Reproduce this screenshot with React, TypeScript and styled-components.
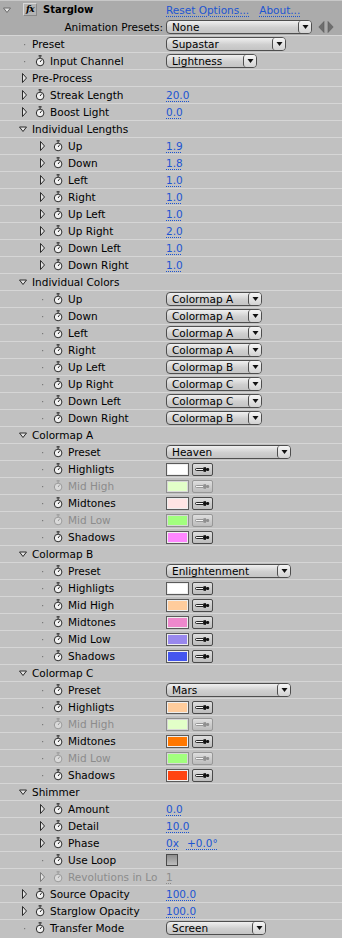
import React from "react";
import styled, { createGlobalStyle } from "styled-components";

const rowBg = "#c1c1c1";
const headBg = "#ababab";
const line = "#d6d6d6";
const blue = "#1d55d2";
const dimText = "#8c8c8c";

const Global = createGlobalStyle`
  html, body {
    margin: 0;
    background: ${rowBg};
  }
  body {
    font-family: "DejaVu Sans", "Liberation Sans", sans-serif;
    font-size: 10.5px;
    color: #000;
  }
`;

const Panel = styled.div`
  width: 342px;
  min-height: 938px;
  background: ${rowBg};
  overflow: hidden;
`;

const Header = styled.div`
  background: ${headBg};
  border-top: 1px solid #c8c8c8;
  height: 34px;
  display: grid;
  grid-template-rows: 17px 17px;
`;

const HeadLine = styled.div`
  display: grid;
  grid-template-columns: 166px 1fr;
  align-items: center;
`;

const HeadName = styled.div`
  display: flex;
  align-items: center;
  padding-left: 3px;
  gap: 6px;
  font-weight: bold;
  font-size: 10px;
`;

const FxBox = styled.span`
  width: 12px;
  height: 11px;
  border: 1px solid #d8d8d8;
  border-right-color: #8a8a8a;
  border-bottom-color: #8a8a8a;
  background: #b4b4b4;
  font-family: "DejaVu Serif", serif;
  font-style: italic;
  font-weight: bold;
  font-size: 9px;
  line-height: 11px;
  text-align: center;
  letter-spacing: -0.5px;
`;

const Links = styled.div`
  display: flex;
  gap: 10px;
`;

const Link = styled.span`
  color: ${blue};
  text-decoration: underline dotted;
  text-underline-offset: 2px;
`;

const PresetLabel = styled.div`
  text-align: right;
  padding-right: 3px;
`;

const PresetControls = styled.div`
  display: flex;
  align-items: center;
  gap: 6px;
`;

const Row = styled.div`
  height: 16px;
  border-top: 1px solid ${line};
  display: grid;
  grid-template-columns: 158px 1fr;
  align-items: center;
`;

const LabelCell = styled.div<{ $indent: number; $dim?: boolean }>`
  display: flex;
  align-items: center;
  padding-left: ${(p) => p.$indent}px;
  white-space: nowrap;
  color: ${(p) => (p.$dim ? dimText : "#000")};
`;

const Slot = styled.span<{ $w: number }>`
  flex: none;
  width: ${(p) => p.$w}px;
  height: 16px;
  display: flex;
  align-items: center;
`;

const ValueCell = styled.div`
  padding-left: 8px;
  display: flex;
  align-items: center;
  gap: 8px;
  white-space: nowrap;
`;

const Num = styled.span<{ $dim?: boolean }>`
  color: ${(p) => (p.$dim ? dimText : blue)};
  text-decoration: underline dotted;
  text-underline-offset: 2px;
`;

const DropBox = styled.div<{ $w: number }>`
  box-sizing: border-box;
  width: ${(p) => p.$w}px;
  height: 14px;
  border: 1px solid #4e4e4e;
  border-radius: 4px;
  background: linear-gradient(#f0f0f0, #cfcfcf 55%, #c4c4c4);
  display: flex;
  align-items: stretch;
  overflow: hidden;
`;

const DropText = styled.span`
  flex: 1;
  padding-left: 5px;
  line-height: 12px;
`;

const DropArrow = styled.span`
  width: 12px;
  border-left: 1px solid #4e4e4e;
  border-radius: 3px 0 0 3px;
  display: flex;
  align-items: center;
  justify-content: center;
  background: linear-gradient(#f6f6f6, #d2d2d2);
`;

const Swatch = styled.span<{ $c: string; $dim?: boolean }>`
  box-sizing: border-box;
  width: 23px;
  height: 13px;
  border: 1px solid ${(p) => (p.$dim ? "#909090" : "#5a5a5a")};
  box-shadow: inset 0 0 0 1px ${(p) => (p.$dim ? "#d8d8d8" : "#eeeeee")};
  background: ${(p) => p.$c};
`;

const Dropper = styled.span<{ $dim?: boolean }>`
  box-sizing: border-box;
  width: 21px;
  height: 13px;
  border: 1px solid ${(p) => (p.$dim ? "#979797" : "#4a4a4a")};
  border-radius: 2px;
  background: linear-gradient(#dedede, #bcbcbc);
  display: flex;
  align-items: center;
  justify-content: center;
`;

const ColorPair = styled.span`
  display: flex;
  align-items: center;
  gap: 3px;
`;

const Check = styled.span`
  box-sizing: border-box;
  width: 12px;
  height: 12px;
  border: 1px solid #4a4a4a;
  background: linear-gradient(#8e8e8e, #bdbdbd);
`;

const TwirlRight = ({ dim }: { dim?: boolean }) => (
  <svg width="14" height="16" viewBox="0 0 14 16">
    <path
      d="M4.5 3.5 L8.5 8 L4.5 12.5 Z"
      fill="#e4e4e4"
      stroke={dim ? "#7a7a7a" : "#2a2a2a"}
      strokeWidth="1"
      strokeLinejoin="round"
    />
  </svg>
);

const TwirlDown = ({ color = "#2a2a2a", x = 1 }: { color?: string; x?: number }) => (
  <svg width="14" height="16" viewBox="0 0 14 16">
    <path
      d={`M${x + 0.5} 6 L${x + 7.5} 6 L${x + 4} 10.5 Z`}
      fill="#e4e4e4"
      stroke={color}
      strokeWidth="1"
      strokeLinejoin="round"
    />
  </svg>
);

const Dot = () => (
  <svg width="14" height="16" viewBox="0 0 14 16">
    <rect x="6" y="8" width="1.2" height="1.2" fill="#7a7a7a" />
  </svg>
);

const Watch = ({ dim }: { dim?: boolean }) => {
  const s = dim ? "#9a9a9a" : "#2c2c2c";
  return (
    <svg width="18" height="16" viewBox="0 0 18 16">
      <rect x="6.6" y="2.2" width="3" height="1.3" fill={s} />
      <line x1="8.1" y1="3.4" x2="8.1" y2="5" stroke={s} strokeWidth="1" />
      <circle cx="8.1" cy="9" r="3.8" fill={dim ? "#dadada" : "#f2f2f2"} stroke={s} strokeWidth="1" />
      <line x1="8.1" y1="9" x2="9.8" y2="6.6" stroke={s} strokeWidth="1" />
    </svg>
  );
};

const SmallArrow = () => (
  <svg width="7" height="6" viewBox="0 0 7 6">
    <path d="M0.5 1 L6.5 1 L3.5 5 Z" fill="#111" />
  </svg>
);

const Pipette = ({ dim }: { dim?: boolean }) => {
  const c = dim ? "#8f8f8f" : "#111";
  return (
    <svg width="15" height="7" viewBox="0 0 15 7">
      <path d="M1.5 2.5 H8.5 V4.5 H1.5 A1 1 0 0 1 1.5 2.5 Z" fill="#f6f6f6" stroke={c} strokeWidth="0.9" />
      <rect x="8.5" y="1.2" width="2.5" height="4.6" fill={c} />
      <rect x="11" y="2" width="3.2" height="3" rx="1.3" fill={c} />
    </svg>
  );
};

const PresetArrows = () => (
  <svg width="16" height="12" viewBox="0 0 16 12">
    <path d="M6 0.5 L0.8 6 L6 11.5 Z" fill="#6e6e6e" stroke="#5a5a5a" strokeWidth="0.6" />
    <path d="M10 0.5 L15.2 6 L10 11.5 Z" fill="#6e6e6e" stroke="#5a5a5a" strokeWidth="0.6" />
  </svg>
);

type Twirl = "open" | "closed" | "dot";

type ParamProps = {
  label: string;
  level?: 0 | 1;
  twirl?: Twirl;
  watch?: boolean;
  dim?: boolean;
  children?: React.ReactNode;
};

const Param = ({ label, level = 0, twirl = "dot", watch = true, dim, children }: ParamProps) => (
  <Row>
    <LabelCell $indent={level === 0 ? 18 : 36} $dim={dim}>
      <Slot $w={14}>
        {twirl === "open" && <TwirlDown />}
        {twirl === "closed" && <TwirlRight dim={dim} />}
        {twirl === "dot" && <Dot />}
      </Slot>
      {watch && (
        <Slot $w={18}>
          <Watch dim={dim} />
        </Slot>
      )}
      {label}
    </LabelCell>
    <ValueCell>{children}</ValueCell>
  </Row>
);

const Dropdown = ({ text, w }: { text: string; w: number }) => (
  <DropBox $w={w}>
    <DropText>{text}</DropText>
    <DropArrow>
      <SmallArrow />
    </DropArrow>
  </DropBox>
);

const ColorVal = ({ c, dim }: { c: string; dim?: boolean }) => (
  <ColorPair>
    <Swatch $c={c} $dim={dim} />
    <Dropper $dim={dim}>
      <Pipette dim={dim} />
    </Dropper>
  </ColorPair>
);

const lengths: [string, string][] = [
  ["Up", "1.9"],
  ["Down", "1.8"],
  ["Left", "1.0"],
  ["Right", "1.0"],
  ["Up Left", "1.0"],
  ["Up Right", "2.0"],
  ["Down Left", "1.0"],
  ["Down Right", "1.0"],
];

const colorsFor: [string, string][] = [
  ["Up", "Colormap A"],
  ["Down", "Colormap A"],
  ["Left", "Colormap A"],
  ["Right", "Colormap A"],
  ["Up Left", "Colormap B"],
  ["Up Right", "Colormap C"],
  ["Down Left", "Colormap C"],
  ["Down Right", "Colormap B"],
];

type Colormap = {
  name: string;
  preset: string;
  swatches: { label: string; c: string; dim?: boolean }[];
};

const colormaps: Colormap[] = [
  {
    name: "Colormap A",
    preset: "Heaven",
    swatches: [
      { label: "Highligts", c: "#ffffff" },
      { label: "Mid High", c: "#e2ffc8", dim: true },
      { label: "Midtones", c: "#ffe4e4" },
      { label: "Mid Low", c: "#a2ff7e", dim: true },
      { label: "Shadows", c: "#ff86ff" },
    ],
  },
  {
    name: "Colormap B",
    preset: "Enlightenment",
    swatches: [
      { label: "Highligts", c: "#ffffff" },
      { label: "Mid High", c: "#ffcc9c" },
      { label: "Midtones", c: "#ee88cc" },
      { label: "Mid Low", c: "#9988ee" },
      { label: "Shadows", c: "#4455ee" },
    ],
  },
  {
    name: "Colormap C",
    preset: "Mars",
    swatches: [
      { label: "Highligts", c: "#ffcc9c" },
      { label: "Mid High", c: "#e2ffc8", dim: true },
      { label: "Midtones", c: "#ff7700" },
      { label: "Mid Low", c: "#a2ff7e", dim: true },
      { label: "Shadows", c: "#ff4411" },
    ],
  },
];

const App = () => (
  <Panel>
    <Global />
    <Header>
      <HeadLine>
        <HeadName>
          <TwirlDown color="#6a6a6a" x={0} />
          <FxBox>fx</FxBox>
          Starglow
        </HeadName>
        <Links>
          <Link>Reset Options...</Link>
          <Link>About...</Link>
        </Links>
      </HeadLine>
      <HeadLine>
        <PresetLabel>Animation Presets:</PresetLabel>
        <PresetControls>
          <Dropdown text="None" w={146} />
          <PresetArrows />
        </PresetControls>
      </HeadLine>
    </Header>

    <Param label="Preset" watch={false}>
      <Dropdown text="Supastar" w={120} />
    </Param>
    <Param label="Input Channel">
      <Dropdown text="Lightness" w={91} />
    </Param>
    <Param label="Pre-Process" twirl="closed" watch={false} />
    <Param label="Streak Length" twirl="closed">
      <Num>20.0</Num>
    </Param>
    <Param label="Boost Light" twirl="closed">
      <Num>0.0</Num>
    </Param>

    <Param label="Individual Lengths" twirl="open" watch={false} />
    {lengths.map(([l, v]) => (
      <Param key={"len" + l} label={l} level={1} twirl="closed">
        <Num>{v}</Num>
      </Param>
    ))}

    <Param label="Individual Colors" twirl="open" watch={false} />
    {colorsFor.map(([l, v]) => (
      <Param key={"col" + l} label={l} level={1}>
        <Dropdown text={v} w={96} />
      </Param>
    ))}

    {colormaps.map((m) => (
      <React.Fragment key={m.name}>
        <Param label={m.name} twirl="open" watch={false} />
        <Param label="Preset" level={1}>
          <Dropdown text={m.preset} w={125} />
        </Param>
        {m.swatches.map((s) => (
          <Param key={m.name + s.label} label={s.label} level={1} dim={s.dim}>
            <ColorVal c={s.c} dim={s.dim} />
          </Param>
        ))}
      </React.Fragment>
    ))}

    <Param label="Shimmer" twirl="open" watch={false} />
    <Param label="Amount" level={1} twirl="closed">
      <Num>0.0</Num>
    </Param>
    <Param label="Detail" level={1} twirl="closed">
      <Num>10.0</Num>
    </Param>
    <Param label="Phase" level={1} twirl="closed">
      <Num>0x</Num>
      <Num>+0.0°</Num>
    </Param>
    <Param label="Use Loop" level={1}>
      <Check />
    </Param>
    <Param label="Revolutions in Lo" level={1} twirl="closed" dim>
      <Num $dim>1</Num>
    </Param>
    <Param label="Source Opacity" twirl="closed">
      <Num>100.0</Num>
    </Param>
    <Param label="Starglow Opacity" twirl="closed">
      <Num>100.0</Num>
    </Param>
    <Param label="Transfer Mode">
      <Dropdown text="Screen" w={100} />
    </Param>
  </Panel>
);

export default App;
